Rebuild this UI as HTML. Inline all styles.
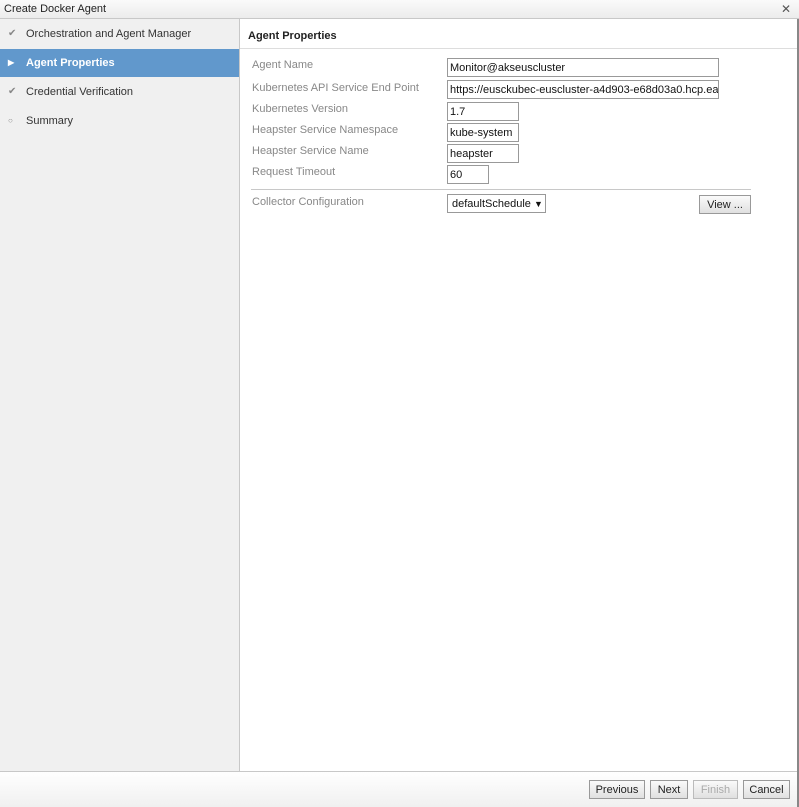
<!DOCTYPE html>
<html><head><meta charset="utf-8"><style>
*{box-sizing:border-box;margin:0;padding:0}
body{width:799px;height:807px;background:#fff;font-family:"Liberation Sans",sans-serif;font-size:11px;color:#222;position:relative;overflow:hidden}
.abs{position:absolute;white-space:nowrap}
.title{left:0;top:0;width:799px;height:19px;background:linear-gradient(#fafafa,#ececec);border-bottom:1px solid #c8c8c8;line-height:18px;padding-left:4px;color:#222}
.close{right:8px;top:0;line-height:18px;font-size:12px;color:#555}
.side{left:0;top:19px;width:240px;height:752px;background:#f0f0f0;border-right:1px solid #c8c8c8}
.item{position:absolute;left:0;width:239px;height:28px;line-height:28px;padding-left:26px;color:#333}
.item .ic{position:absolute;left:8px;top:0;color:#888;font-size:10px}
.sel{background:#6198cc;color:#fff;font-weight:bold}
.rb{left:797px;top:19px;width:2px;height:788px;background:#888}
.hdr{left:248px;top:30px;font-weight:bold}
.hline{left:240px;top:48px;width:557px;height:1px;background:#ddd}
.lbl{left:252px;color:#888}
.in{left:447px;height:19px;border:1px solid #999;background:#fff;padding-left:2px;line-height:19px;color:#111;overflow:hidden}
.sep{left:251px;top:189px;width:500px;height:1px;background:#c8c8c8}
.btn{height:19px;border:1px solid #999;background:linear-gradient(#fafafa,#e0e0e0);text-align:center;line-height:18px;color:#222}
.foot{left:0;top:771px;width:797px;height:36px;background:linear-gradient(#fff,#f0f0f0);border-top:1px solid #c8c8c8}
</style></head><body>
<div class="abs title">Create Docker Agent</div>
<div class="abs close">✕</div>
<div class="abs side">
 <div class="item" style="top:1px"><span class="ic">✔</span>Orchestration and Agent Manager</div>
 <div class="item sel" style="top:30px"><span class="ic" style="color:#fff;font-size:8px">▶</span>Agent Properties</div>
 <div class="item" style="top:59px"><span class="ic">✔</span>Credential Verification</div>
 <div class="item" style="top:88px"><span class="ic" style="font-size:8px">○</span>Summary</div>
</div>
<div class="abs rb"></div>
<div class="abs hdr">Agent Properties</div>
<div class="abs hline"></div>
<div class="abs lbl" style="top:59px">Agent Name</div>
<div class="abs lbl" style="top:82px">Kubernetes API Service End Point</div>
<div class="abs lbl" style="top:103px">Kubernetes Version</div>
<div class="abs lbl" style="top:124px">Heapster Service Namespace</div>
<div class="abs lbl" style="top:145px">Heapster Service Name</div>
<div class="abs lbl" style="top:166px">Request Timeout</div>
<div class="abs lbl" style="top:196px">Collector Configuration</div>
<div class="abs in" style="top:58px;width:272px">Monitor@akseuscluster</div>
<div class="abs in" style="top:80px;width:272px">https://eusckubec-euscluster-a4d903-e68d03a0.hcp.east</div>
<div class="abs in" style="top:102px;width:72px">1.7</div>
<div class="abs in" style="top:123px;width:72px">kube-system</div>
<div class="abs in" style="top:144px;width:72px">heapster</div>
<div class="abs in" style="top:165px;width:42px">60</div>
<div class="abs sep"></div>
<div class="abs in" style="top:194px;width:99px;padding-left:4px">defaultSchedule <span style="font-size:9px">▼</span></div>
<div class="abs btn" style="left:699px;top:195px;width:52px">View ...</div>
<div class="abs foot"></div>
<div class="abs btn" style="left:589px;top:780px;width:56px">Previous</div>
<div class="abs btn" style="left:650px;top:780px;width:38px">Next</div>
<div class="abs btn" style="left:693px;top:780px;width:45px;color:#aaa;border-color:#bbb">Finish</div>
<div class="abs btn" style="left:743px;top:780px;width:47px">Cancel</div>
</body></html>
